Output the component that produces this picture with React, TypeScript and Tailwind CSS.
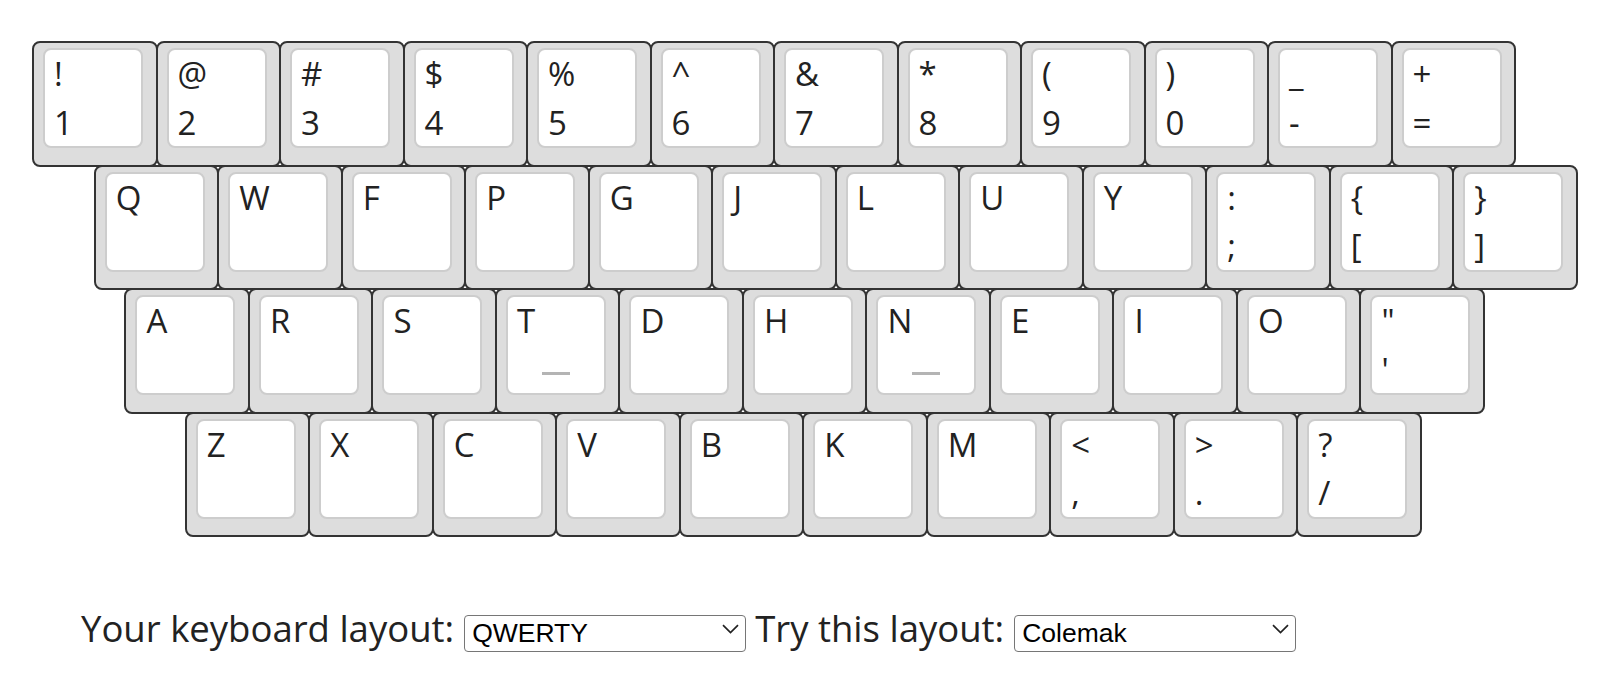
import React from "react";

type KeyDef = { top: string; bottom?: string; bump?: boolean };

const single = (s: string, bump = false): KeyDef => ({ top: s, bump });
const dual = (top: string, bottom: string): KeyDef => ({ top, bottom });

const rows: { offset: string; keys: KeyDef[] }[] = [
  {
    offset: "ml-0",
    keys: [
      dual("!", "1"),
      dual("@", "2"),
      dual("#", "3"),
      dual("$", "4"),
      dual("%", "5"),
      dual("^", "6"),
      dual("&", "7"),
      dual("*", "8"),
      dual("(", "9"),
      dual(")", "0"),
      dual("_", "-"),
      dual("+", "="),
    ],
  },
  {
    offset: "ml-[61.7px]",
    keys: [
      single("Q"),
      single("W"),
      single("F"),
      single("P"),
      single("G"),
      single("J"),
      single("L"),
      single("U"),
      single("Y"),
      dual(":", ";"),
      dual("{", "["),
      dual("}", "]"),
    ],
  },
  {
    offset: "ml-[92.4px]",
    keys: [
      single("A"),
      single("R"),
      single("S"),
      single("T", true),
      single("D"),
      single("H"),
      single("N", true),
      single("E"),
      single("I"),
      single("O"),
      dual('"', "'"),
    ],
  },
  {
    offset: "ml-[152.8px]",
    keys: [
      single("Z"),
      single("X"),
      single("C"),
      single("V"),
      single("B"),
      single("K"),
      single("M"),
      dual("<", ","),
      dual(">", "."),
      dual("?", "/"),
    ],
  },
];

function Key({ k }: { k: KeyDef }) {
  return (
    <div className="-mr-[2px] -mb-[2px] h-[125.5px] w-[125.5px] shrink-0 rounded-[8px] border-2 border-[#333333] bg-[#dddddd] pl-[9px] pt-[5.3px]">
      <div className="relative flex h-[100px] w-[100px] flex-col justify-between rounded-[8px] border-2 border-[#cdcdcd] bg-white pb-[7.5px] pl-[9px] pt-[7px] text-[33px] leading-none text-[#222222]">
        <span>{k.top}</span>
        <span>{k.bottom ?? ""}</span>
        {k.bump && (
          <div className="absolute bottom-[18px] left-1/2 h-[3px] w-[28px] -translate-x-1/2 bg-[#b4b4b4]" />
        )}
      </div>
    </div>
  );
}

function Chevron() {
  return (
    <svg
      className="pointer-events-none absolute right-[7px] top-1/2 -translate-y-1/2"
      width="17"
      height="10"
      viewBox="0 0 17 10"
      fill="none"
    >
      <path d="M1 1.2 L8.5 8.5 L16 1.2" stroke="#222" strokeWidth="1.7" />
    </svg>
  );
}

function LayoutSelect({ value, options }: { value: string; options: string[] }) {
  return (
    <div className="relative h-[37px] w-[282px] shrink-0">
      <select
        defaultValue={value}
        className="h-full w-full appearance-none rounded-[4px] border-[1.5px] border-[#767676] bg-white pl-[7px] text-[26.5px] leading-none text-black [font-family:'Liberation_Sans',Arial,sans-serif]"
      >
        {options.map((o) => (
          <option key={o} value={o}>
            {o}
          </option>
        ))}
      </select>
      <Chevron />
    </div>
  );
}

const layouts = ["QWERTY", "Dvorak", "Colemak", "Colemak-DH", "Workman", "AZERTY", "QWERTZ"];

export default function App() {
  return (
    <div className="h-[680px] w-[1610px] bg-white pl-[32px] pt-[41px] [font-family:'Open_Sans',sans-serif]">
      <div className="flex flex-col">
        {rows.map((row, i) => (
          <div key={i} className={`flex ${row.offset}`}>
            {row.keys.map((k, j) => (
              <Key key={j} k={k} />
            ))}
          </div>
        ))}
      </div>
      <div className="ml-[49px] mt-[75px] flex items-center text-[36.5px] leading-none text-[#222222]">
        <span>Your keyboard layout:</span>
        <div className="ml-[10px]">
          <LayoutSelect value="QWERTY" options={layouts} />
        </div>
        <span className="ml-[9px]">Try this layout:</span>
        <div className="ml-[10px]">
          <LayoutSelect value="Colemak" options={layouts} />
        </div>
      </div>
    </div>
  );
}
